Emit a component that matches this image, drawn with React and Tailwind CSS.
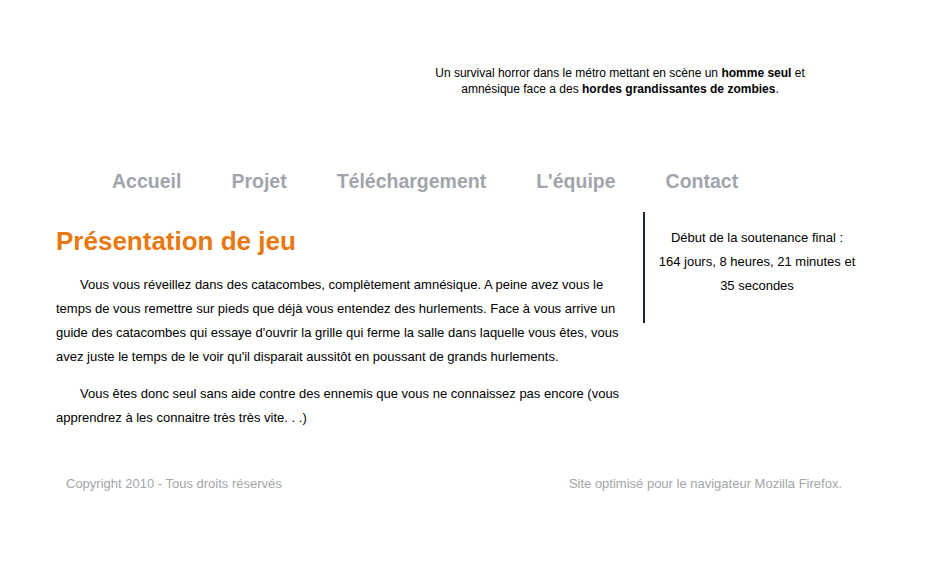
export default function App() {
  const nav = ["Accueil", "Projet", "Téléchargement", "L'équipe", "Contact"];
  return (
    <div className="w-[932px] h-[567px] bg-white text-black font-['Liberation_Sans',Arial,sans-serif] overflow-hidden">
      <header className="pt-[65px]">
        <p className="ml-[414px] w-[412px] text-center text-[12px] leading-[16px]">
          Un survival horror dans le métro mettant en scène un <b>homme seul</b> et
          <br />
          amnésique face a des <b>hordes grandissantes de zombies</b>.
        </p>
      </header>
      <nav className="mt-[72px] flex pl-[87px]">
        {nav.map((n) => (
          <a key={n} className="px-[25px] text-[19.5px] leading-[24px] font-bold text-[#a1a5ab]">
            {n}
          </a>
        ))}
      </nav>
      <main className="mt-[19px] flex">
        <section className="ml-[56px] w-[575px] pt-[14px]">
          <h1 className="text-[26px] leading-[30px] font-bold text-[#e8780f]">Présentation de jeu</h1>
          <p className="mt-[17px] indent-[24px] text-[13px] leading-[24px]">
            Vous vous réveillez dans des catacombes, complètement amnésique. A peine avez vous le temps de vous remettre sur pieds que déjà vous entendez des hurlements. Face à vous arrive un guide des catacombes qui essaye d'ouvrir la grille qui ferme la salle dans laquelle vous êtes, vous avez juste le temps de le voir qu'il disparait aussitôt en poussant de grands hurlements.
          </p>
          <p className="mt-[13px] indent-[24px] text-[13px] leading-[24px]">
            Vous êtes donc seul sans aide contre des ennemis que vous ne connaissez pas encore (vous apprendrez à les connaitre très très vite. . .)
          </p>
        </section>
        <aside className="ml-[12px] self-start h-[111px] w-[226px] border-l-2 border-[#1c2a38] pt-[14px] text-center text-[13px] leading-[24px]">
          Début de la soutenance final :
          <br />
          164 jours, 8 heures, 21 minutes et
          <br />
          35 secondes
        </aside>
      </main>
      <footer className="mt-[46px] flex justify-between pl-[66px] pr-[90px] text-[13px] leading-[16px] text-[#a3a6aa]">
        <span>Copyright 2010 - Tous droits réservés</span>
        <span>Site optimisé pour le navigateur Mozilla Firefox.</span>
      </footer>
    </div>
  );
}
